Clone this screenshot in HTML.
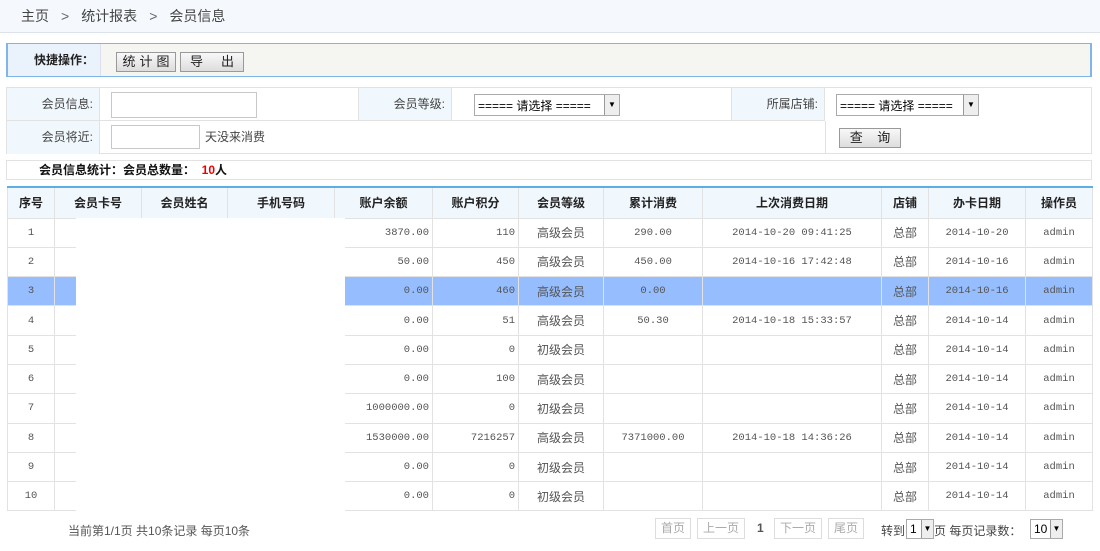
<!DOCTYPE html>
<html><head><meta charset="utf-8"><style>
*{margin:0;padding:0;box-sizing:border-box}
body{width:1100px;height:551px;background:#fff;font-family:"Liberation Sans","Noto Sans CJK SC",sans-serif;font-size:12px;color:#333;position:relative;overflow:hidden}
.crumb{position:absolute;left:0;top:0;width:1100px;height:33px;background:#f5f9fd;border-bottom:1px solid #dde3ea;font-size:14px;color:#444;line-height:32px;padding-left:21px}
.crumb span{margin:0 12px;color:#666}
.quick{position:absolute;left:6px;top:43px;width:1086px;height:34px;border:2px solid #7fb5e8;border-top-width:1px;border-bottom-width:1px;background:#f5f5f2}
.quick .lbl{position:absolute;left:0;top:0;width:93px;height:32px;background:#eaf3fc;border-right:1px solid #dde;font-weight:bold;text-align:right;padding-right:6px;line-height:32px;color:#222}
.btn{position:absolute;height:20px;border:1px solid #999;background:linear-gradient(#f8f8f8,#ddd);font-size:13px;line-height:18px;text-align:center;color:#222;white-space:nowrap;overflow:hidden}
.search{position:absolute;left:6px;top:87px;width:1086px;height:67px;border:1px solid #e2e2e2}
.c{position:absolute;border-right:1px solid #e2e2e2;border-bottom:1px solid #e2e2e2}
.lb{background:#f0f7fd;text-align:right;padding-right:6px;line-height:32px;color:#444}
.inp{position:absolute;border:1px solid #c8c8c8;background:#fff}
.sel{position:absolute;height:22px;border:1px solid #aaa;background:#fff;font-size:12px;line-height:22px;padding-left:3px;color:#000;white-space:nowrap}
.sel i{position:absolute;right:0;top:0;width:15px;height:20px;border-left:1px solid #999;background:#eee;font-style:normal;font-size:8px;text-align:center;line-height:20px}
.stat{position:absolute;left:6px;top:160px;width:1086px;height:20px;border:1px solid #e2e2e2;font-weight:bold;line-height:19px;padding-left:32px;color:#111}
table{position:absolute;left:7px;top:186px;border-collapse:collapse;table-layout:fixed;width:1085px;border-top:2px solid #5eaee6}
th{height:31px;background:#f0f7fd;border:1px solid #e2e2e2;font-weight:bold;color:#222;font-size:12px}
td{height:29.3px;border:1px solid #e2e2e2;text-align:center;font-family:"Liberation Mono","Noto Sans CJK SC",monospace;font-size:10.5px;color:#555}
td.r{text-align:right;padding-right:3px}
td.cn{font-family:"Liberation Sans","Noto Sans CJK SC",sans-serif;font-size:12px}
tr.hl td{background:#96bdfd}
.mask{position:absolute;left:76px;top:218px;width:269px;height:293px;background:#fff}
.pg{position:absolute;top:518px;height:21px;border:1px solid #ddd;color:#aaa;line-height:19px;padding:0 5px;font-size:12px}
</style></head><body>
<div class="crumb">主页<span>&gt;</span>统计报表<span>&gt;</span>会员信息</div>
<div class="quick"><div class="lbl">快捷操作：</div>
<div class="btn" style="left:108px;top:8px;width:60px;letter-spacing:4px;padding-left:4px">统计图</div>
<div class="btn" style="left:172px;top:8px;width:64px">导&nbsp;&nbsp;&nbsp;&nbsp;&nbsp;出</div></div>
<div class="search">
<div class="c lb" style="left:0;top:0;width:93px;height:33px">会员信息:</div>
<div class="inp" style="left:104px;top:4px;width:146px;height:26px"></div>
<div class="c" style="left:93px;top:0;width:259px;height:33px"></div>
<div class="c lb" style="left:352px;top:0;width:93px;height:33px">会员等级:</div>
<div class="sel" style="left:467px;top:6px;width:146px">===== 请选择 =====<i>▼</i></div>
<div class="c" style="left:445px;top:0;width:280px;height:33px"></div>
<div class="c lb" style="left:725px;top:0;width:93px;height:33px">所属店铺:</div>
<div class="sel" style="left:829px;top:6px;width:143px">===== 请选择 =====<i>▼</i></div>
<div class="c lb" style="left:0;top:33px;width:93px;height:33px;border-bottom:none">会员将近:</div>
<div class="inp" style="left:104px;top:37px;width:89px;height:24px"></div>
<div style="position:absolute;left:198px;top:33px;line-height:32px;color:#444">天没来消费</div>
<div style="position:absolute;left:818px;top:33px;width:1px;height:33px;background:#e2e2e2"></div>
<div class="btn" style="left:832px;top:40px;width:62px">查&nbsp;&nbsp;&nbsp;&nbsp;询</div>
</div>
<div class="stat">会员信息统计：会员总数量： <span style="color:#e00">&nbsp;10</span>人</div>
<table>
<colgroup><col style="width:47px"><col style="width:87px"><col style="width:86px"><col style="width:107px"><col style="width:98px"><col style="width:86px"><col style="width:85px"><col style="width:99px"><col style="width:179px"><col style="width:47px"><col style="width:97px"><col style="width:67px"></colgroup>
<tr><th>序号</th><th>会员卡号</th><th>会员姓名</th><th>手机号码</th><th>账户余额</th><th>账户积分</th><th>会员等级</th><th>累计消费</th><th>上次消费日期</th><th>店铺</th><th>办卡日期</th><th>操作员</th></tr>
<tr><td>1</td><td></td><td></td><td></td><td class="r">3870.00</td><td class="r">110</td><td class="cn">高级会员</td><td>290.00</td><td>2014-10-20 09:41:25</td><td class="cn">总部</td><td>2014-10-20</td><td>admin</td></tr>
<tr><td>2</td><td></td><td></td><td></td><td class="r">50.00</td><td class="r">450</td><td class="cn">高级会员</td><td>450.00</td><td>2014-10-16 17:42:48</td><td class="cn">总部</td><td>2014-10-16</td><td>admin</td></tr>
<tr class="hl"><td>3</td><td></td><td></td><td></td><td class="r">0.00</td><td class="r">460</td><td class="cn">高级会员</td><td>0.00</td><td></td><td class="cn">总部</td><td>2014-10-16</td><td>admin</td></tr>
<tr><td>4</td><td></td><td></td><td></td><td class="r">0.00</td><td class="r">51</td><td class="cn">高级会员</td><td>50.30</td><td>2014-10-18 15:33:57</td><td class="cn">总部</td><td>2014-10-14</td><td>admin</td></tr>
<tr><td>5</td><td></td><td></td><td></td><td class="r">0.00</td><td class="r">0</td><td class="cn">初级会员</td><td></td><td></td><td class="cn">总部</td><td>2014-10-14</td><td>admin</td></tr>
<tr><td>6</td><td></td><td></td><td></td><td class="r">0.00</td><td class="r">100</td><td class="cn">高级会员</td><td></td><td></td><td class="cn">总部</td><td>2014-10-14</td><td>admin</td></tr>
<tr><td>7</td><td></td><td></td><td></td><td class="r">1000000.00</td><td class="r">0</td><td class="cn">初级会员</td><td></td><td></td><td class="cn">总部</td><td>2014-10-14</td><td>admin</td></tr>
<tr><td>8</td><td></td><td></td><td></td><td class="r">1530000.00</td><td class="r">7216257</td><td class="cn">高级会员</td><td>7371000.00</td><td>2014-10-18 14:36:26</td><td class="cn">总部</td><td>2014-10-14</td><td>admin</td></tr>
<tr><td>9</td><td></td><td></td><td></td><td class="r">0.00</td><td class="r">0</td><td class="cn">初级会员</td><td></td><td></td><td class="cn">总部</td><td>2014-10-14</td><td>admin</td></tr>
<tr><td>10</td><td></td><td></td><td></td><td class="r">0.00</td><td class="r">0</td><td class="cn">初级会员</td><td></td><td></td><td class="cn">总部</td><td>2014-10-14</td><td>admin</td></tr>
</table>
<div class="mask"></div>
<div style="position:absolute;left:68px;top:522px;color:#555">当前第1/1页 共10条记录 每页10条</div>
<div class="pg" style="left:655px">首页</div>
<div class="pg" style="left:697px">上一页</div>
<div style="position:absolute;left:757px;top:521px;font-weight:bold;color:#555">1</div>
<div class="pg" style="left:774px">下一页</div>
<div class="pg" style="left:828px">尾页</div>
<div style="position:absolute;left:881px;top:522px;color:#444">转到</div>
<div class="sel" style="left:906px;top:519px;width:28px;height:20px;line-height:18px">1<i style="width:12px;height:18px;line-height:18px">▼</i></div>
<div style="position:absolute;left:934px;top:522px;color:#444">页 每页记录数：</div>
<div class="sel" style="left:1030px;top:519px;width:33px;height:20px;line-height:18px">10<i style="width:12px;height:18px;line-height:18px">▼</i></div>
</body></html>
